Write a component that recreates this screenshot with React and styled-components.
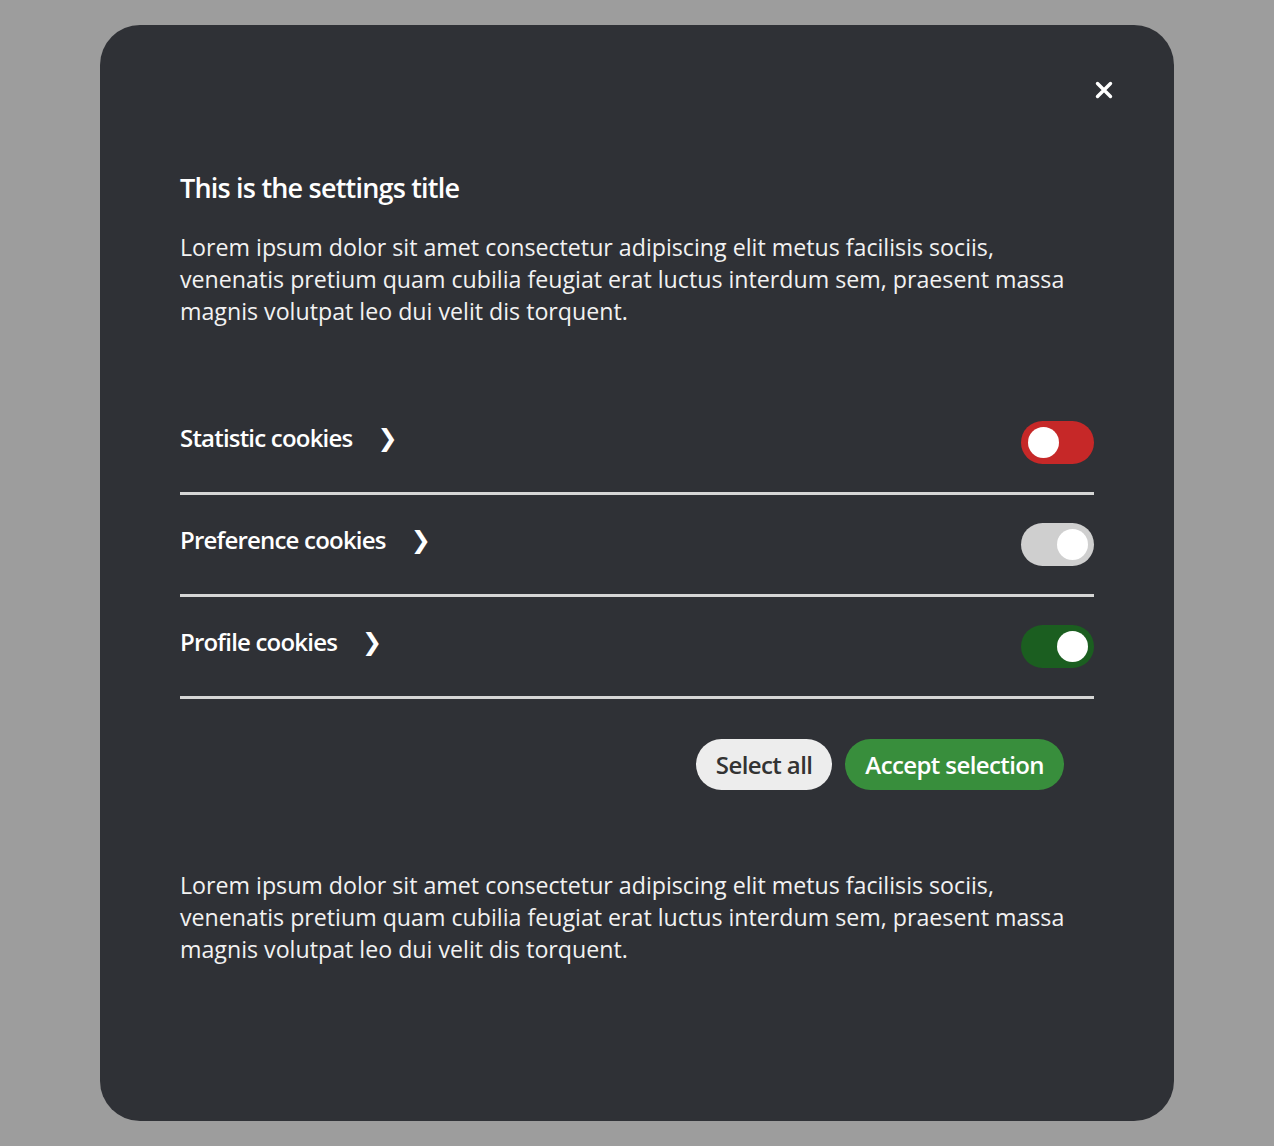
import React, { useState } from 'react';
import styled, { createGlobalStyle } from 'styled-components';

const GlobalStyle = createGlobalStyle`
  html, body {
    margin: 0;
    padding: 0;
    background: #9d9d9d;
    font-family: 'Open Sans', 'Noto Sans', sans-serif;
  }
`;

const cookieGroups = [
  { id: 'statistic', label: 'Statistic cookies', state: 'off' },
  { id: 'preference', label: 'Preference cookies', state: 'neutral' },
  { id: 'profile', label: 'Profile cookies', state: 'on' },
];

const lorem =
  'Lorem ipsum dolor sit amet consectetur adipiscing elit metus facilisis sociis, venenatis pretium quam cubilia feugiat erat luctus interdum sem, praesent massa magnis volutpat leo dui velit dis torquent.';

const trackColors = {
  off: '#c62828',
  neutral: '#cfcfcf',
  on: '#1b5e20',
};

export default function App() {
  const [groups, setGroups] = useState(cookieGroups);

  const flip = id =>
    setGroups(gs =>
      gs.map(g =>
        g.id === id ? { ...g, state: g.state === 'on' ? 'off' : 'on' } : g
      )
    );

  return (
    <Page>
      <GlobalStyle />
      <Modal>
        <TopBar>
          <Close aria-label="Close">
            <svg width="18" height="18" viewBox="0 0 18 18">
              <path
                d="M2.5 2.5 L15.5 15.5 M15.5 2.5 L2.5 15.5"
                stroke="#fff"
                strokeWidth="3.4"
                strokeLinecap="round"
              />
            </svg>
          </Close>
        </TopBar>
        <Title>This is the settings title</Title>
        <Text>{lorem}</Text>
        <List>
          {groups.map(g => (
            <Row key={g.id}>
              <Label>
                {g.label}
                <Chevron>❯</Chevron>
              </Label>
              <Toggle $state={g.state} onClick={() => flip(g.id)}>
                <Knob $state={g.state} />
              </Toggle>
            </Row>
          ))}
        </List>
        <Actions>
          <Button>Select all</Button>
          <Button $primary>Accept selection</Button>
        </Actions>
        <Text>{lorem}</Text>
      </Modal>
    </Page>
  );
}

const Page = styled.div`
  min-height: 100vh;
  box-sizing: border-box;
  padding: 25px 100px 26px;
`;

const Modal = styled.div`
  width: 1074px;
  box-sizing: border-box;
  background: #2f3136;
  border-radius: 40px;
  padding: 52px 80px 156px;
  color: #fff;
`;

const TopBar = styled.div`
  display: flex;
  justify-content: flex-end;
  margin-right: -23px;
`;

const Close = styled.button`
  width: 26px;
  height: 26px;
  padding: 0;
  border: none;
  background: none;
  display: flex;
  align-items: center;
  justify-content: center;
  cursor: pointer;
`;

const Title = styled.h2`
  margin: 67px 0 25px;
  font-size: 27px;
  line-height: 36px;
  font-weight: 600;
  letter-spacing: -0.8px;
`;

const Text = styled.p`
  margin: 0;
  font-size: 23.2px;
  line-height: 32px;
  font-weight: 400;
  color: #f2f2f2;
`;

const List = styled.div`
  margin-top: 66px;
`;

const Row = styled.div`
  display: flex;
  align-items: center;
  justify-content: space-between;
  padding: 28px 0;
  border-bottom: 3px solid #d6d6d6;
`;

const Label = styled.div`
  display: flex;
  align-items: center;
  gap: 25px;
  height: 30px;
  line-height: 30px;
  font-size: 24px;
  font-weight: 600;
  letter-spacing: -0.8px;
  margin-bottom: 10px;
`;

const Chevron = styled.span`
  font-family: 'DejaVu Sans', sans-serif;
  font-size: 24px;
  line-height: 30px;
  font-weight: 700;
  letter-spacing: 0;
`;

const Toggle = styled.button`
  position: relative;
  width: 73px;
  height: 43px;
  border: none;
  border-radius: 22px;
  padding: 0;
  background: ${p => trackColors[p.$state]};
  cursor: pointer;
`;

const Knob = styled.span`
  position: absolute;
  top: 6px;
  left: ${p => (p.$state === 'off' ? '7px' : '36px')};
  width: 31px;
  height: 31px;
  border-radius: 50%;
  background: #fff;
`;

const Actions = styled.div`
  display: flex;
  justify-content: flex-end;
  gap: 13px;
  margin: 40px 30px 79px 0;
`;

const Button = styled.button`
  height: 51px;
  padding: 0 20px;
  border: none;
  border-radius: 26px;
  font-family: 'Open Sans', sans-serif;
  font-size: 24px;
  font-weight: 600;
  letter-spacing: -0.6px;
  line-height: 48px;
  background: ${p => (p.$primary ? '#388e3c' : '#ededed')};
  color: ${p => (p.$primary ? '#fff' : '#333')};
  cursor: pointer;
`;
